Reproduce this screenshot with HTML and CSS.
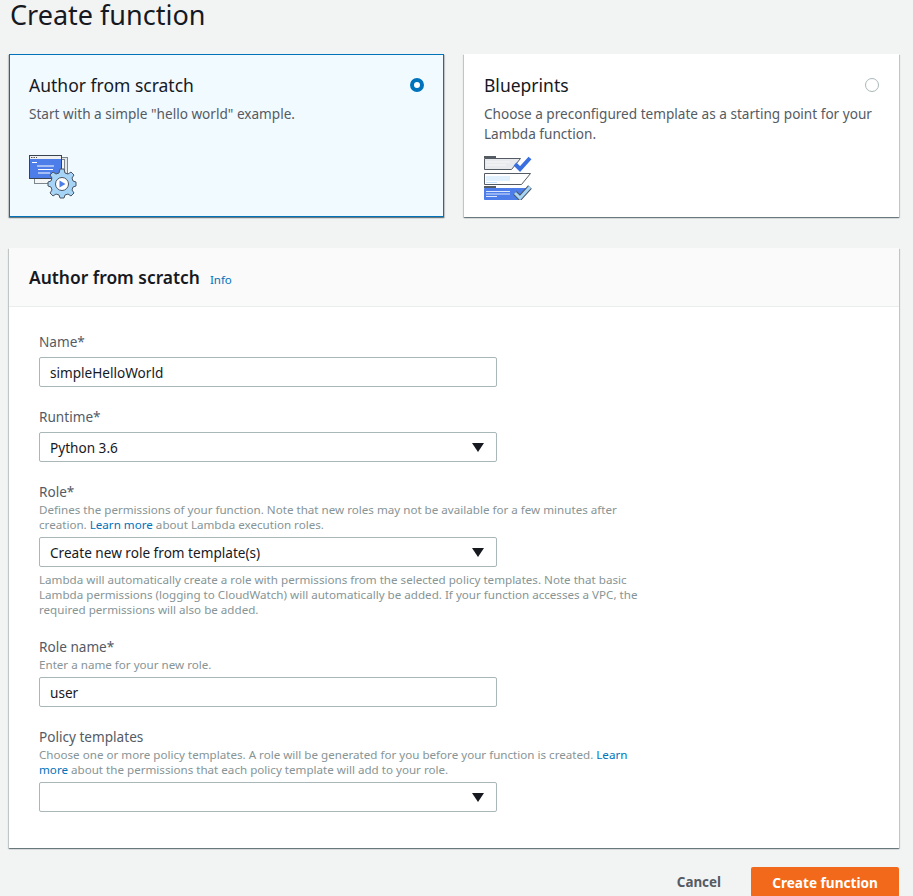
FILE: index.html
```html
<!DOCTYPE html>
<html lang="en">
<head>
<meta charset="UTF-8" />
<title>Create function</title>
<link rel="stylesheet" href="styles.css">
</head>
<body>

<h1 class="page-title">Create function</h1>

<div class="cards">
  <div class="card card-selected">
    <div class="card-head">
      <h2>Author from scratch</h2>
      <span class="radio radio-on"></span>
    </div>
    <p class="card-text">Start with a simple "hello world" example.</p>
    <svg class="card-icon icon-scratch" width="48" height="46" viewBox="0 0 48 46">
      <rect x="8.5" y="2.5" width="30" height="24" fill="#e4e7ea" stroke="#7d858d"/>
      <rect x="5.5" y="4.5" width="30" height="24" fill="#f4f5f6" stroke="#7d858d"/>
      <rect x="0.5" y="0.5" width="32" height="23" fill="#4d7de8" stroke="#3a4350"/>
      <rect x="1" y="1" width="31" height="3" fill="#eef0f2"/>
      <path d="M2 2.5h6" stroke="#555" stroke-dasharray="1.5 1"/>
      <path d="M3 7.5h5M8 11h17M9 14.5h15M9 18h12" stroke="#fff"/>
      <path d="M31 14h4l1 4 3 1 3-2 3 3-2 3 1 3 3 1v4l-3 1-1 3 2 3-3 3-3-2-3 1-1 3h-4l-1-3-3-1-3 2-3-3 2-3-1-3-3-1v-4l3-1 1-3-2-3 3-3 3 2 3-1z" fill="#a6d4f7" stroke="#4b5563"/>
      <circle cx="33" cy="29" r="6.5" fill="#fff" stroke="#4b5563"/>
      <path d="M30.500 25.500l6 3.500-6 3.500z" fill="#4d7de8"/>
    </svg>
  </div>
  <div class="card">
    <div class="card-head">
      <h2>Blueprints</h2>
      <span class="radio"></span>
    </div>
    <p class="card-text">Choose a preconfigured template as a starting point for your Lambda function.</p>
    <svg class="card-icon icon-blueprints" width="48" height="44" viewBox="0 0 48 44">
      <path d="M0.5 2.5h36l-9 11h-27z" fill="#e8e9ec" stroke="#555b63"/>
      <path d="M0 1h12" stroke="#555b63" stroke-width="2"/>
      <path d="M2 6h24M2 9h20" stroke="#f6f7f8"/>
      <path d="M31 8l5 5 10-11" fill="none" stroke="#3a6fe0" stroke-width="4"/>
      <path d="M0.5 17.5h46l-9 11h-37z" fill="#fff" stroke="#555b63"/>
      <path d="M2 20h24v5h-24z" fill="#e1f1fd"/>
      <path d="M2 26.5h11" stroke="#c4e3fb"/>
      <path d="M0.5 32.5h34l-1 0 12 0-9 11h-36z" fill="#4d7de8" stroke="#4d7de8"/>
      <path d="M0 31h12" stroke="#555b63" stroke-width="2"/>
      <path d="M2 35.500h24M2 38h24M2 40.500h11" stroke="#dbe7ff"/>
      <path d="M31 37l5 5 10-11" fill="none" stroke="#4b5563" stroke-width="5"/>
      <path d="M31 37l5 5 10-11" fill="none" stroke="#a6d4f7" stroke-width="3"/>
    </svg>
  </div>
</div>

<div class="panel">
  <div class="panel-head">
    <h2>Author from scratch</h2>
    <a class="info-link" href="#">Info</a>
  </div>
  <form class="panel-body">
    <div class="field">
      <label>Name*</label>
      <div class="control">simpleHelloWorld</div>
    </div>
    <div class="field">
      <label>Runtime*</label>
      <div class="control control-select">Python 3.6</div>
    </div>
    <div class="field">
      <label>Role*</label>
      <p class="hint hint-above">Defines the permissions of your function. Note that new roles may not be available for a few minutes after creation. <a href="#">Learn more</a> about Lambda execution roles.</p>
      <div class="control control-select">Create new role from template(s)</div>
      <p class="hint hint-below">Lambda will automatically create a role with permissions from the selected policy templates. Note that basic Lambda permissions (logging to CloudWatch) will automatically be added. If your function accesses a VPC, the required permissions will also be added.</p>
    </div>
    <div class="field">
      <label>Role name*</label>
      <p class="hint hint-above">Enter a name for your new role.</p>
      <div class="control">user</div>
    </div>
    <div class="field">
      <label>Policy templates</label>
      <p class="hint hint-above">Choose one or more policy templates. A role will be generated for you before your function is created. <a href="#">Learn more</a> about the permissions that each policy template will add to your role.</p>
      <div class="control control-select"></div>
    </div>
  </form>
</div>

<div class="actions">
  <a class="btn-cancel" href="#">Cancel</a>
  <button class="btn-primary" type="button">Create function</button>
</div>

</body>
</html>
```

FILE: styles.css
```css
html, body {
  height: 896px;
  overflow: hidden;
}
body {
  margin: 0;
  padding: 0 14px 0 9px;
  background: #f2f3f3;
  color: #16191f;
  font-family: "Noto Sans", "Open Sans", sans-serif;
  font-size: 13.6px;
}
a {
  color: #0073bb;
  text-decoration: none;
}
.page-title {
  margin: 0 0 0 1px;
  height: 54px;
  font-size: 27px;
  line-height: 29px;
  font-weight: 400;
}
.cards {
  display: flex;
  gap: 20px;
}
.card {
  flex: 1;
  box-sizing: border-box;
  height: 163px;
  padding: 18px 20px 0;
  background: #fff;
  box-shadow: 0 1px 1px 0 rgba(0,28,36,0.4), 1px 1px 1px 0 rgba(0,28,36,0.15), -1px 1px 1px 0 rgba(0,28,36,0.15);
}
.card-selected {
  flex: 0 0 435px;
  border: 1px solid #0073bb;
  background: #f1faff;
  padding: 17px 19px 0;
}
.card-head {
  display: flex;
  justify-content: space-between;
  align-items: center;
}
.card-head h2 {
  margin: 0;
  font-size: 17.5px;
  line-height: 26px;
  font-weight: 400;
}
.card-text {
  margin: 6px 0 0;
  color: #545b64;
  line-height: 20px;
}
.card-icon {
  display: block;
}
.icon-scratch {
  margin-top: 31px;
}
.icon-blueprints {
  margin-top: 12px;
}
.radio {
  box-sizing: border-box;
  width: 14px;
  height: 14px;
  border: 1px solid #aab7b8;
  border-radius: 50%;
  background: #fff;
}
.radio-on {
  border: 4px solid #0073bb;
}
.panel {
  margin-top: 31px;
  height: 600px;
  background: #fff;
  box-shadow: 0 1px 1px 0 rgba(0,28,36,0.4), 1px 1px 1px 0 rgba(0,28,36,0.15), -1px 1px 1px 0 rgba(0,28,36,0.15);
}
.panel-head {
  box-sizing: border-box;
  display: flex;
  align-items: baseline;
  gap: 10px;
  height: 59px;
  padding: 16px 20px 0;
  background: #fafafa;
  border-bottom: 1px solid #eaeded;
}
.panel-head h2 {
  margin: 0;
  font-size: 17.4px;
  line-height: 26px;
  font-weight: 600;
}
.info-link {
  font-size: 11.5px;
}
.panel-body {
  padding: 26px 30px 0;
}
.field {
  width: 600px;
  margin-bottom: 21px;
}
.field label {
  display: block;
  height: 20px;
  margin-bottom: 4px;
  color: #545b64;
  line-height: 18px;
}
.field label:has(+ .hint) {
  height: 19px;
  margin-bottom: 0;
}
.hint {
  margin: 0;
  color: #879596;
  font-size: 11.62px;
  line-height: 15px;
}
.hint-above {
  margin-bottom: 5px;
}
.hint-below {
  margin-top: 5px;
}
.control {
  box-sizing: border-box;
  width: 458px;
  height: 30px;
  padding: 0 10px;
  border: 1px solid #aab7b8;
  border-radius: 2px;
  background: #fff;
  line-height: 29px;
}
.control-select {
  position: relative;
}
.control-select::after {
  content: "";
  position: absolute;
  right: 12px;
  top: 10px;
  border-left: 6px solid transparent;
  border-right: 6px solid transparent;
  border-top: 9px solid #16191f;
}
.actions {
  display: flex;
  justify-content: flex-end;
  align-items: center;
  gap: 30px;
  margin-top: 19px;
}
.btn-cancel {
  color: #545b64;
  font-size: 13.4px;
  font-weight: 700;
}
.btn-primary {
  width: 148px;
  height: 30px;
  border: none;
  border-radius: 2px;
  background: #f2691c;
  color: #fff;
  font-family: inherit;
  font-size: 13.6px;
  font-weight: 700;
}
```
